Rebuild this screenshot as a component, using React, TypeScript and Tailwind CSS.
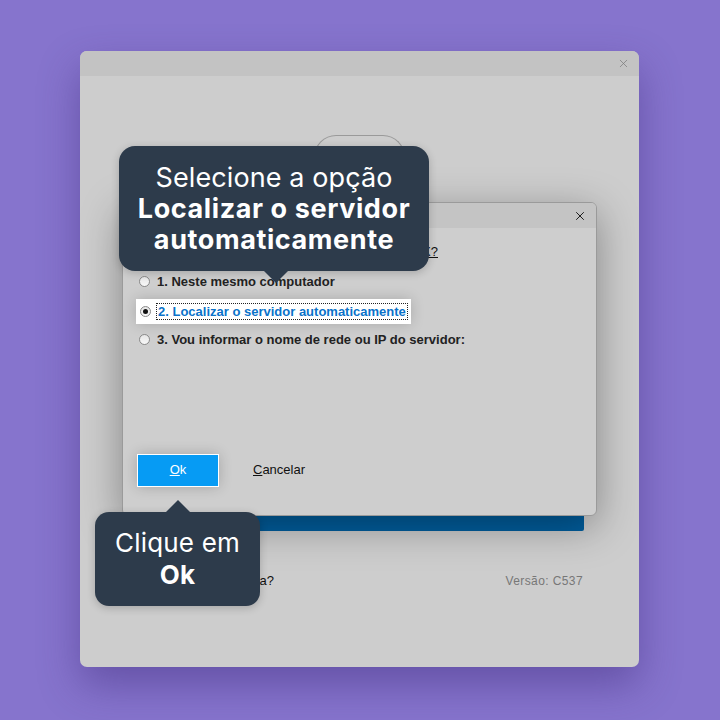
import { X } from "lucide-react";

function Radio({ checked }: { checked?: boolean }) {
  return (
    <span className="w-[11px] h-[11px] rounded-full border border-[#8a8a8a] bg-gradient-to-b from-[#e6e6e6] to-[#f8f8f8] flex items-center justify-center shrink-0">
      {checked && <span className="w-[5px] h-[5px] rounded-full bg-[#111]" />}
    </span>
  );
}

export default function App() {
  return (
    <div className="relative w-[720px] h-[720px] bg-[#8674cd] overflow-hidden pt-[51px] pl-[80px] font-['Liberation_Sans',Arial,sans-serif]">
      {/* main window */}
      <div className="relative w-[559px] h-[616px] rounded-[7px] bg-[#cdcdcd] shadow-[0_18px_40px_rgba(60,40,120,0.45)] flex flex-col overflow-hidden">
        <div className="h-[25px] bg-[#c3c3c3] flex items-center justify-end pr-[9px] shrink-0">
          <X className="w-[13px] h-[13px] text-[#777]" strokeWidth={1.3} />
        </div>
        <div className="flex flex-col items-center">
          <div className="mt-[59px] w-[91px] h-[32px] rounded-t-[22px] border border-b-0 border-[#9a9a9a]" />
          <div className="mt-[348px] w-[449px] h-[16px] bg-[#005e9e] rounded-b-[2px]" />
          <div className="mt-[40px] w-[449px] flex items-center justify-between text-[13px]">
            <span className="text-[#111] pl-[35px]">Precisa de ajuda?</span>
            <span className="text-[#777] text-[12px] tracking-[0.4px] pr-[1px]">Versão: C537</span>
          </div>
        </div>

        {/* dialog */}
        <div className="absolute left-[42px] top-[151px] w-[475px] h-[314px] rounded-[6px] border border-[#9a9a9a] bg-[#cecece] shadow-[0_10px_40px_rgba(0,0,0,0.35)] flex flex-col overflow-hidden">
          <div className="h-[25px] bg-[#c4c4c4] flex items-center justify-end pr-[9px] shrink-0">
            <X className="w-[14px] h-[14px] text-[#111]" strokeWidth={1.6} />
          </div>
          <div className="flex flex-col pl-[13px]">
            <div className="mt-[14px] w-[302px] text-right text-[13px] text-[#111] underline">
              Onde está o servidor do Sistema X?
            </div>
            <div className="mt-[12px] flex items-center gap-[7px] pl-[3px] h-[16px] text-[13px] font-bold text-[#222]">
              <Radio />
              <span>1. Neste mesmo computador</span>
            </div>
            <div className="mt-[9px] w-[275px] h-[25px] bg-white flex items-center gap-[5px] pl-[4px] shadow-[0_0_14px_rgba(0,0,0,0.18)]">
              <Radio checked />
              <span className="border border-dotted border-[#222] px-[1px] leading-[15px] text-[13px] font-bold text-[#0b72c9]">
                2. Localizar o servidor automaticamente
              </span>
            </div>
            <div className="mt-[8px] flex items-center gap-[7px] pl-[3px] h-[16px] text-[13px] font-bold text-[#222]">
              <Radio />
              <span>3. Vou informar o nome de rede ou IP do servidor:</span>
            </div>
            <div className="mt-[106px] flex items-center gap-[34px] pl-[1px]">
              <button className="w-[82px] h-[33px] bg-[#069bf4] border border-white text-white text-[13px] shadow-[0_0_14px_rgba(0,0,0,0.2)]">
                <span className="underline">O</span>k
              </button>
              <span className="text-[13px] text-[#111]">
                <span className="underline">C</span>ancelar
              </span>
            </div>
          </div>
        </div>
      </div>

      {/* tooltip 1 */}
      <div className="absolute left-[119px] top-[146px] w-[310px] h-[125px] rounded-[16px] bg-[#2d3b4b] shadow-[0_2px_8px_rgba(0,0,0,0.2)] flex flex-col items-center justify-center text-white text-[27px] leading-[31px] font-['Inter',sans-serif]">
        <span className="tracking-[0.1px]">Selecione a opção</span>
        <span className="font-bold tracking-[0.6px]">Localizar o servidor</span>
        <span className="font-bold tracking-[0.6px]">automaticamente</span>
        <span className="absolute left-[144px] bottom-[-12px] w-0 h-0 border-l-[13px] border-r-[13px] border-t-[13px] border-l-transparent border-r-transparent border-t-[#2d3b4b]" />
      </div>

      {/* tooltip 2 */}
      <div className="absolute left-[95px] top-[512px] w-[165px] h-[94px] rounded-[14px] bg-[#2d3b4b] shadow-[0_2px_8px_rgba(0,0,0,0.2)] flex flex-col items-center justify-center text-white text-[26px] leading-[32px] font-['Inter',sans-serif] tracking-[0.2px]">
        <span>Clique em</span>
        <span className="font-bold">Ok</span>
        <span className="absolute left-[70px] top-[-12px] w-0 h-0 border-l-[13px] border-r-[13px] border-b-[13px] border-l-transparent border-r-transparent border-b-[#2d3b4b]" />
      </div>
    </div>
  );
}
